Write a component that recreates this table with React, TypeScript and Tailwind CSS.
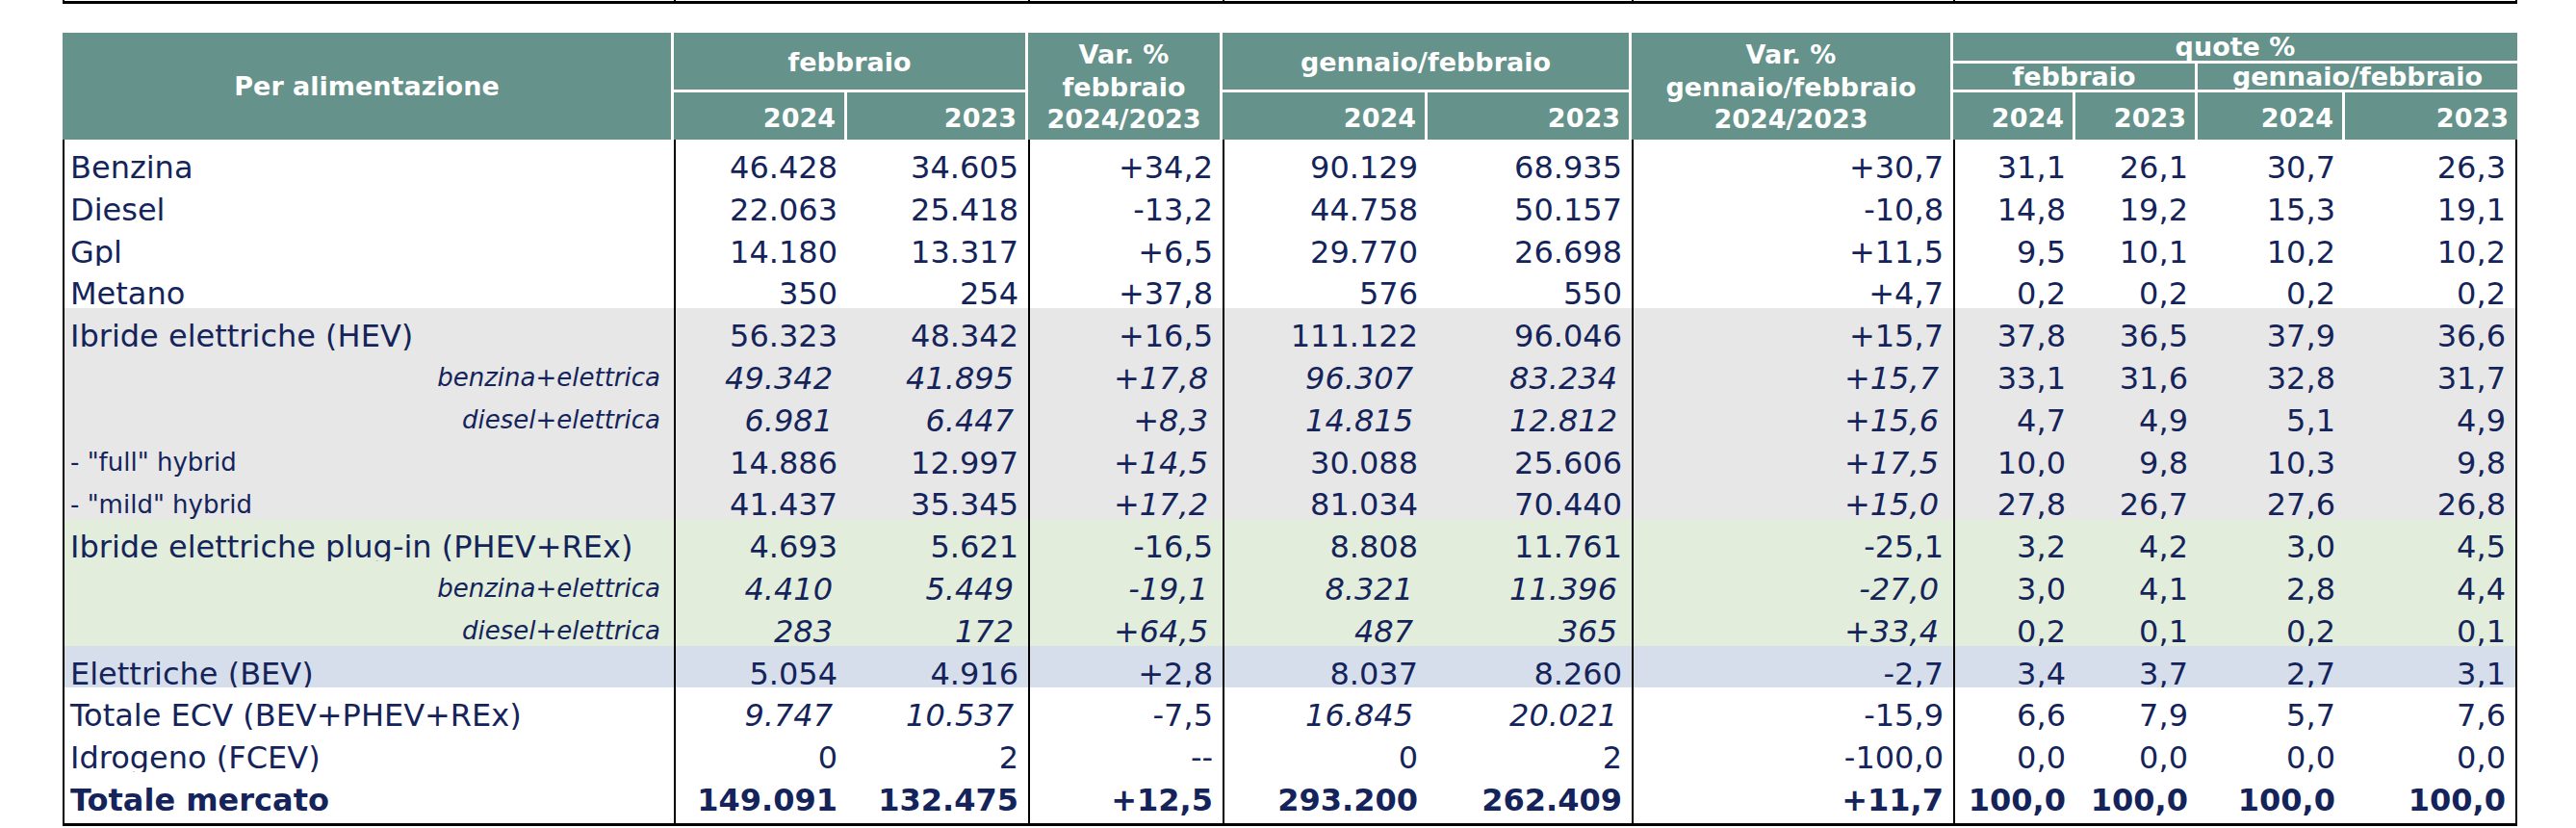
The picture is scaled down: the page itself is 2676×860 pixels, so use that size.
import React from 'react';

type Kind = 'main' | 'sub' | 'small' | 'bold';

type Row = {
  label: string;
  kind: Kind;
  bg: string;
  vals: string[];
  it: number[];
};

const NONE = [0, 0, 0, 0, 0, 0, 0, 0, 0, 0];
const SUB = [1, 1, 1, 1, 1, 1, 0, 0, 0, 0];
const HYB = [0, 0, 1, 0, 0, 1, 0, 0, 0, 0];
const ECV = [1, 1, 0, 1, 1, 0, 0, 0, 0, 0];

const WHITE = 'bg-white';
const GREY = 'bg-[#e7e7e7]';
const GREEN = 'bg-[#e2eedb]';
const BLUE = 'bg-[#d6deec]';

const ROWS: Row[] = [
  { label: 'Benzina', kind: 'main', bg: WHITE, it: NONE, vals: ['46.428', '34.605', '+34,2', '90.129', '68.935', '+30,7', '31,1', '26,1', '30,7', '26,3'] },
  { label: 'Diesel', kind: 'main', bg: WHITE, it: NONE, vals: ['22.063', '25.418', '-13,2', '44.758', '50.157', '-10,8', '14,8', '19,2', '15,3', '19,1'] },
  { label: 'Gpl', kind: 'main', bg: WHITE, it: NONE, vals: ['14.180', '13.317', '+6,5', '29.770', '26.698', '+11,5', '9,5', '10,1', '10,2', '10,2'] },
  { label: 'Metano', kind: 'main', bg: WHITE, it: NONE, vals: ['350', '254', '+37,8', '576', '550', '+4,7', '0,2', '0,2', '0,2', '0,2'] },
  { label: 'Ibride elettriche (HEV)', kind: 'main', bg: GREY, it: NONE, vals: ['56.323', '48.342', '+16,5', '111.122', '96.046', '+15,7', '37,8', '36,5', '37,9', '36,6'] },
  { label: 'benzina+elettrica', kind: 'sub', bg: GREY, it: SUB, vals: ['49.342', '41.895', '+17,8', '96.307', '83.234', '+15,7', '33,1', '31,6', '32,8', '31,7'] },
  { label: 'diesel+elettrica', kind: 'sub', bg: GREY, it: SUB, vals: ['6.981', '6.447', '+8,3', '14.815', '12.812', '+15,6', '4,7', '4,9', '5,1', '4,9'] },
  { label: '- "full" hybrid', kind: 'small', bg: GREY, it: HYB, vals: ['14.886', '12.997', '+14,5', '30.088', '25.606', '+17,5', '10,0', '9,8', '10,3', '9,8'] },
  { label: '- "mild" hybrid', kind: 'small', bg: GREY, it: HYB, vals: ['41.437', '35.345', '+17,2', '81.034', '70.440', '+15,0', '27,8', '26,7', '27,6', '26,8'] },
  { label: 'Ibride elettriche plug-in (PHEV+REx)', kind: 'main', bg: GREEN, it: NONE, vals: ['4.693', '5.621', '-16,5', '8.808', '11.761', '-25,1', '3,2', '4,2', '3,0', '4,5'] },
  { label: 'benzina+elettrica', kind: 'sub', bg: GREEN, it: SUB, vals: ['4.410', '5.449', '-19,1', '8.321', '11.396', '-27,0', '3,0', '4,1', '2,8', '4,4'] },
  { label: 'diesel+elettrica', kind: 'sub', bg: GREEN, it: SUB, vals: ['283', '172', '+64,5', '487', '365', '+33,4', '0,2', '0,1', '0,2', '0,1'] },
  { label: 'Elettriche (BEV)', kind: 'main', bg: BLUE, it: NONE, vals: ['5.054', '4.916', '+2,8', '8.037', '8.260', '-2,7', '3,4', '3,7', '2,7', '3,1'] },
  { label: 'Totale ECV (BEV+PHEV+REx)', kind: 'main', bg: WHITE, it: ECV, vals: ['9.747', '10.537', '-7,5', '16.845', '20.021', '-15,9', '6,6', '7,9', '5,7', '7,6'] },
  { label: 'Idrogeno (FCEV)', kind: 'main', bg: WHITE, it: NONE, vals: ['0', '2', '--', '0', '2', '-100,0', '0,0', '0,0', '0,0', '0,0'] },
  { label: 'Totale mercato', kind: 'bold', bg: WHITE, it: NONE, vals: ['149.091', '132.475', '+12,5', '293.200', '262.409', '+11,7', '100,0', '100,0', '100,0', '100,0'] },
];

// columns that start with a black rule in the body (index into the 10 value columns)
const RULED = [0, 2, 3, 5, 6];

const BODY_COLS = 'grid grid-cols-[635px_180px_188px_202px_213px_212px_334px_127px_127px_153px_179px]';

function TopStrip() {
  return (
    <div className={`${BODY_COLS} h-[4px]`}>
      {Array.from({ length: 11 }).map((_, i) => (
        <div
          key={i}
          className={[
            'border-b-[3px] border-b-black',
            i === 0 || RULED.includes(i - 1) ? 'border-l-2 border-l-black' : '',
            i === 10 ? 'border-r-2 border-r-black' : '',
          ].join(' ')}
        />
      ))}
    </div>
  );
}

function Head({ className, children }: { className: string; children: React.ReactNode }) {
  return <div className={`flex bg-[#65928a] text-white ${className}`}>{children}</div>;
}

function Header() {
  return (
    <div className="grid grid-cols-[632px_177px_185px_199px_210px_209px_331px_124px_124px_150px_179px] grid-rows-[29px_27px_49px] gap-[3px] text-[27px] font-bold leading-[33.5px]">
      <Head className="col-start-1 row-start-1 row-span-3 items-center justify-center">Per alimentazione</Head>
      <Head className="col-start-2 col-span-2 row-start-1 row-span-2 items-center justify-center pt-[2px]">febbraio</Head>
      <Head className="col-start-4 row-start-1 row-span-3 flex-col items-center justify-center pt-[2px] text-center">
        <span>Var. %</span>
        <span>febbraio</span>
        <span>2024/2023</span>
      </Head>
      <Head className="col-start-5 col-span-2 row-start-1 row-span-2 items-center justify-center pt-[2px]">gennaio/febbraio</Head>
      <Head className="col-start-7 row-start-1 row-span-3 flex-col items-center justify-center pt-[2px] text-center">
        <span>Var. %</span>
        <span>gennaio/febbraio</span>
        <span>2024/2023</span>
      </Head>
      <Head className="col-start-8 col-span-4 row-start-1 items-center justify-center">quote %</Head>
      <Head className="col-start-8 col-span-2 row-start-2 items-center justify-center">febbraio</Head>
      <Head className="col-start-10 col-span-2 row-start-2 items-center justify-center">gennaio/febbraio</Head>
      {[
        ['col-start-2', '2024'],
        ['col-start-3', '2023'],
        ['col-start-5', '2024'],
        ['col-start-6', '2023'],
        ['col-start-8', '2024'],
        ['col-start-9', '2023'],
        ['col-start-10', '2024'],
        ['col-start-11', '2023'],
      ].map(([c, y]) => (
        <Head key={c} className={`${c} row-start-3 items-center justify-end pr-[9px] pt-[5px]`}>
          {y}
        </Head>
      ))}
    </div>
  );
}

function BodyRow({ row, last }: { row: Row; last: boolean }) {
  const sep = last ? 'border-b-[3px] border-b-black' : 'border-b-[3px] border-b-[#f2f2f2]';
  const bold = row.kind === 'bold' ? 'font-bold' : '';

  let labelCls = 'justify-start pl-[6px] text-[32px]';
  if (row.kind === 'sub') labelCls = 'justify-end pr-[14px] text-[26px] italic';
  if (row.kind === 'small') labelCls = 'justify-start pl-[6px] text-[26px]';

  return (
    <div className={`${BODY_COLS} h-[43.8px]`}>
      <div className={`flex items-center pt-[5px] whitespace-nowrap border-l-2 border-l-black ${row.bg} ${sep} ${bold} ${labelCls}`}>
        {row.label}
      </div>
      {row.vals.map((v, i) => (
        <div
          key={i}
          className={[
            'flex items-center justify-end pt-[5px] text-[32px] whitespace-nowrap',
            row.bg,
            sep,
            bold,
            row.it[i] ? 'italic pr-[15px]' : 'pr-[10px]',
            RULED.includes(i) ? 'border-l-2 border-l-black' : '',
            i === 9 ? 'border-r-2 border-r-black' : '',
          ].join(' ')}
        >
          {v}
        </div>
      ))}
    </div>
  );
}

export default function App() {
  return (
    <div className="w-[2676px] h-[860px] overflow-hidden bg-white pl-[65px] font-['DejaVu_Sans','Verdana',sans-serif] text-[#14245a]">
      <div className="w-[2550px]">
        <TopStrip />
        <div className="h-[30px]" />
        <Header />
        <div>
          {ROWS.map((r, i) => (
            <BodyRow key={i} row={r} last={i === ROWS.length - 1} />
          ))}
        </div>
      </div>
    </div>
  );
}
